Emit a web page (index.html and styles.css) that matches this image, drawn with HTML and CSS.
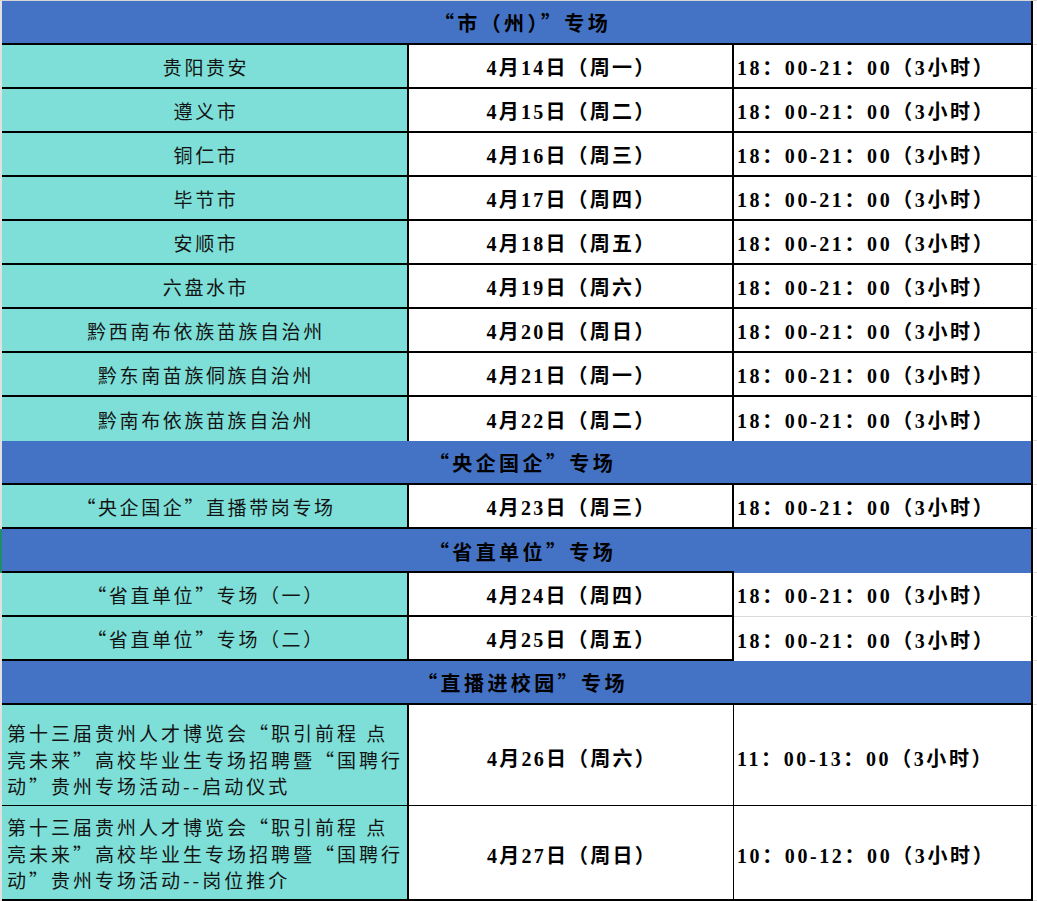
FILE: index.html
```html
<!DOCTYPE html>
<html lang="zh-CN">
<head>
<meta charset="utf-8">
<title>专场安排</title>
<link rel="stylesheet" href="styles.css">
</head>
<body>
<div class="sheet">
  <div class="row head"><div class="cell span">“市（州）”专场</div><div class="out"></div></div>
  <div class="row"><div class="cell c1">贵阳贵安</div><div class="cell c2">4月14日（周一）</div><div class="cell c3">18：00-21：00（3小时）</div><div class="out"></div></div>
  <div class="row"><div class="cell c1">遵义市</div><div class="cell c2">4月15日（周二）</div><div class="cell c3">18：00-21：00（3小时）</div><div class="out"></div></div>
  <div class="row"><div class="cell c1">铜仁市</div><div class="cell c2">4月16日（周三）</div><div class="cell c3">18：00-21：00（3小时）</div><div class="out"></div></div>
  <div class="row"><div class="cell c1">毕节市</div><div class="cell c2">4月17日（周四）</div><div class="cell c3">18：00-21：00（3小时）</div><div class="out"></div></div>
  <div class="row"><div class="cell c1">安顺市</div><div class="cell c2">4月18日（周五）</div><div class="cell c3">18：00-21：00（3小时）</div><div class="out"></div></div>
  <div class="row"><div class="cell c1">六盘水市</div><div class="cell c2">4月19日（周六）</div><div class="cell c3">18：00-21：00（3小时）</div><div class="out"></div></div>
  <div class="row"><div class="cell c1">黔西南布依族苗族自治州</div><div class="cell c2">4月20日（周日）</div><div class="cell c3">18：00-21：00（3小时）</div><div class="out"></div></div>
  <div class="row"><div class="cell c1">黔东南苗族侗族自治州</div><div class="cell c2">4月21日（周一）</div><div class="cell c3">18：00-21：00（3小时）</div><div class="out"></div></div>
  <div class="row"><div class="cell c1 nb">黔南布依族苗族自治州</div><div class="cell c2 nb">4月22日（周二）</div><div class="cell c3 nb">18：00-21：00（3小时）</div><div class="out"></div></div>

  <div class="row head"><div class="cell span">“央企国企”专场</div><div class="out"></div></div>
  <div class="row"><div class="cell c1">“央企国企”直播带岗专场</div><div class="cell c2">4月23日（周三）</div><div class="cell c3">18：00-21：00（3小时）</div><div class="out"></div></div>

  <div class="row head selected"><div class="cell span partial">“省直单位”专场</div><div class="out"></div></div>
  <div class="row"><div class="cell c1">“省直单位”专场（一）</div><div class="cell c2">4月24日（周四）</div><div class="cell c3 soft">18：00-21：00（3小时）</div><div class="out"></div></div>
  <div class="row"><div class="cell c1">“省直单位”专场（二）</div><div class="cell c2">4月25日（周五）</div><div class="cell c3 nb">18：00-21：00（3小时）</div><div class="out"></div></div>

  <div class="row head"><div class="cell span">“直播进校园”专场</div><div class="out"></div></div>
  <div class="row tall first">
    <div class="cell c1 long"><p>第十三届贵州人才博览会“职引前程 点<br>亮未来”高校毕业生专场招聘暨“国聘行<br>动”贵州专场活动--启动仪式</p></div>
    <div class="cell c2">4月26日（周六）</div>
    <div class="cell c3">11：00-13：00（3小时）</div>
    <div class="out"></div>
  </div>
  <div class="row tall last">
    <div class="cell c1 long"><p>第十三届贵州人才博览会“职引前程 点<br>亮未来”高校毕业生专场招聘暨“国聘行<br>动”贵州专场活动--岗位推介</p></div>
    <div class="cell c2">4月27日（周日）</div>
    <div class="cell c3">10：00-12：00（3小时）</div>
    <div class="out"></div>
  </div>
</div>
</body>
</html>
```
FILE: styles.css
```css
html, body {
  margin: 0;
  padding: 0;
  background: #ffffff;
}

body {
  font-family: "Noto Sans CJK SC", sans-serif;
  color: #000;
}

.sheet {
  border-top: 1px solid #d6d6d6;
}

.row {
  display: flex;
  height: 44px;
  border-left: 2px solid #e1e1e1;
}

.row.selected {
  border-left-color: #1d8f68;
}

.cell {
  box-sizing: border-box;
  height: 100%;
  display: flex;
  align-items: center;
  white-space: nowrap;
  border-bottom: 2px solid #000;
  border-right: 2px solid #000;
}

.span {
  width: 1031px;
  background: #4472c4;
  justify-content: center;
  font-family: "Noto Sans CJK SC", sans-serif;
  font-weight: 700;
  font-size: 20px;
  letter-spacing: 3.4px;
  padding-left: 12px;
  color: #000;
}

.span.partial {
  border-bottom: none;
  background: linear-gradient(#000, #000) left bottom / 732px 2px no-repeat, #4472c4;
}

.c1 {
  width: 407px;
  background: #7ddfd7;
  justify-content: center;
  font-family: "Noto Sans CJK SC", sans-serif;
  font-size: 19px;
  letter-spacing: 2.6px;
  color: #141414;
  padding-left: 3px;
}

.c2 {
  width: 325px;
  background: #fff;
  justify-content: center;
  font-family: "Liberation Serif", "Noto Sans CJK SC", serif;
  font-weight: 700;
  font-size: 20px;
  letter-spacing: 2.2px;
  padding-left: 2px;
}

.c3 {
  width: 299px;
  background: #fff;
  padding-left: 3px;
  font-family: "Liberation Serif", "Noto Sans CJK SC", serif;
  font-weight: 700;
  font-size: 20px;
  letter-spacing: 2.6px;
}

.nb {
  border-bottom: none;
}

.c3.soft {
  border-bottom: 1px solid #dadada;
}

.out {
  flex: 1;
  border-bottom: 1px solid #dadada;
}

.row.tall.first {
  height: 101px;
}

.row.tall.last {
  height: 95px;
}

.row.tall .cell {
  border-bottom-width: 1px;
  padding-top: 4px;
}

.row.tall .c2 {
  border-right-width: 1px;
}

.row.tall.last .cell {
  border-bottom-width: 2px;
}

.c1.long {
  justify-content: flex-start;
  align-items: flex-start;
  padding-left: 5px;
}

.c1.long p {
  margin: 0;
  font-size: 19px;
  line-height: 26.5px;
  letter-spacing: 3px;
}

.row.tall.first .c1.long {
  padding-top: 15px;
}

.row.tall.last .c1.long {
  padding-top: 8px;
}
```
